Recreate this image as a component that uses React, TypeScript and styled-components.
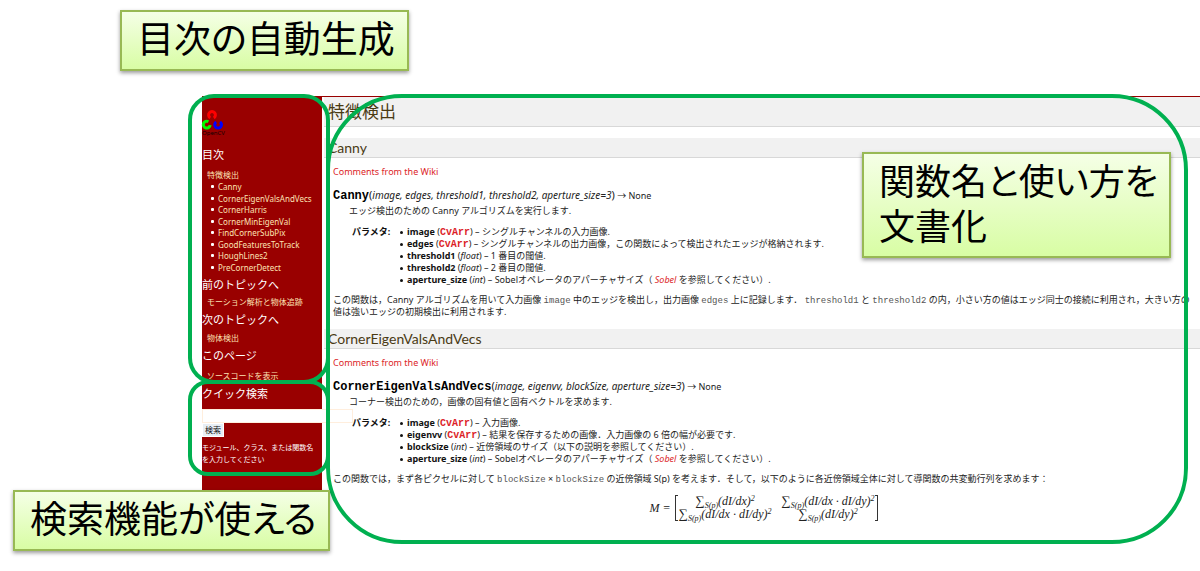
import React from "react";
import styled, { createGlobalStyle } from "styled-components";

const GlobalStyle = createGlobalStyle`
  *, *::before, *::after { box-sizing: border-box; }
  body {
    margin: 0;
    background: #fff;
    font-family: "Noto Sans", "Noto Sans CJK JP", sans-serif;
    font-size: 9px;
    line-height: 12px;
    color: #222;
  }
  h1, h2, h3, p, ul, dl, dt, dd { margin: 0; padding: 0; font-weight: 400; }
`;

const Slide = styled.div`
  position: relative;
  padding: 96px 0 36px 202px;
`;

const Doc = styled.div`
  display: flex;
  align-items: flex-start;
  border-top: 1px solid #900;
`;

const Sidebar = styled.nav`
  flex: 0 0 120px;
  min-width: 0;
  background: #900;
  color: #fff;
  font-size: 8px;
  padding: 13px 0 36px;
`;

const Logo = styled.svg`
  display: block;
  margin-bottom: 10px;
  overflow: visible;
`;

const SideTitle = styled.h3<{ $gap: number }>`
  font-size: 11px;
  line-height: 16px;
  margin-bottom: ${(p) => p.$gap}px;
  white-space: nowrap;
`;

const SideBody = styled.div`
  padding-left: 5px;
  margin-bottom: 4px;
`;

const SideLink = styled.a`
  color: #fde3b4;
  text-decoration: none;
  white-space: nowrap;
`;

const SideList = styled.ul`
  list-style: none;
  display: grid;
  grid-auto-rows: 1fr;
  align-items: center;
  height: 92px;
  padding-left: 4px;
`;

const SideItem = styled.li`
  display: flex;
  align-items: center;
  gap: 4px;
  line-height: 11px;
  &::before {
    content: "";
    width: 3px;
    height: 3px;
    border-radius: 1px;
    background: #fff;
  }
`;

const SearchForm = styled.form`
  display: flex;
  flex-direction: column;
  align-items: flex-start;
  padding-top: 4px;
`;

const SearchInput = styled.input`
  width: 151px;
  height: 14px;
  padding: 0 2px;
  border: 1px solid #ffeedd;
  background: #fff;
  font: inherit;
`;

const SearchButton = styled.button`
  height: 14px;
  padding: 0 2px;
  border: 1px solid #fff;
  background: #e8eef4;
  color: #111;
  font: inherit;
  line-height: 12px;
`;

const SearchHint = styled.p`
  margin-top: 5px;
  padding-right: 6px;
  font-size: 7px;
`;

const Main = styled.main`
  flex: 1;
  min-width: 0;
  margin-left: 2px;
`;

const PageTitle = styled.h1`
  margin-bottom: 11px;
  padding-left: 4px;
  font-size: 17px;
  line-height: 29px;
  color: #4a3a14;
  background: #f1f1f1;
  border-bottom: 1px solid #d8d8d8;
`;

const SectionTitle = styled.h2`
  padding-left: 4px;
  font-family: Lato, "Noto Sans CJK JP", sans-serif;
  font-size: 14px;
  line-height: 19px;
  color: #4a3a14;
  background: #f1f1f1;
  border-bottom: 1px solid #d8d8d8;
`;

const Section = styled.section`
  margin-bottom: 11px;
`;

const Body = styled.div`
  padding: 8px 5px 0 9px;
`;

const RedLink = styled.a`
  color: #dc1e28;
  text-decoration: none;
`;

const Signature = styled.p`
  margin-top: 8px;
  line-height: 18px;
  white-space: nowrap;
`;

const FnName = styled.code`
  font-family: "Liberation Mono", monospace;
  font-size: 12px;
  line-height: 1;
  font-weight: 700;
  color: #000;
`;

const Args = styled.i`
  font-size: 10px;
`;

const Paren = styled.span`
  font-size: 11px;
`;

const Summary = styled.p`
  padding-left: 16px;
`;

const Params = styled.dl`
  display: grid;
  grid-template-columns: 48px 1fr;
  margin: 9px 0 8px;
  padding-left: 19px;
`;

const ParamsLabel = styled.dt`
  font-weight: 700;
  color: #111;
`;

const ParamList = styled.ul`
  list-style: none;
`;

const Param = styled.li`
  display: flex;
  align-items: center;
  white-space: pre;
  b { color: #111; }
  &::before {
    content: "";
    width: 3px;
    height: 3px;
    margin-right: 4px;
    border-radius: 50%;
    background: #111;
  }
`;

const TypeLink = styled(RedLink)`
  font-family: "Liberation Mono", monospace;
  font-size: 10px;
  line-height: 1;
  font-weight: 700;
`;

const Code = styled.code`
  font-family: "Liberation Mono", monospace;
  font-size: 9px;
  line-height: 1;
  color: #555;
`;

const Formula = styled.div`
  display: flex;
  justify-content: center;
  align-items: center;
  gap: 4px;
  margin-top: 10px;
  font-family: "Liberation Serif", serif;
  font-size: 12px;
  font-style: italic;
`;

const Matrix = styled.div`
  display: grid;
  grid-template-columns: auto auto;
  column-gap: 10px;
  justify-items: center;
  position: relative;
  padding: 0 4px;
  line-height: 13px;
  white-space: nowrap;
  &::before, &::after {
    content: "";
    position: absolute;
    top: 0;
    bottom: 0;
    width: 3px;
    border: 1px solid #333;
  }
  &::before { left: 0; border-right: 0; }
  &::after { right: 0; border-left: 0; }
`;

const Cell = styled.span`
  sub, sup { font-size: 8px; line-height: 0; }
  sub { vertical-align: -3px; }
  sup { vertical-align: 4px; }
`;

const Sigma = styled.span`
  font-style: normal;
  font-size: 13px;
  line-height: 0;
`;

const Frame = styled.div<{ $radius: number }>`
  position: absolute;
  border: 4px solid #00b050;
  border-radius: ${(p) => p.$radius}px;
  pointer-events: none;
`;

const TocFrame = styled(Frame)`
  left: 188px;
  top: 94px;
  width: 142px;
  height: 290px;
`;

const SearchFrame = styled(Frame)`
  left: 188px;
  top: 380px;
  width: 142px;
  height: 96px;
`;

const ContentFrame = styled(Frame)`
  left: 326px;
  right: 12px;
  top: 94px;
  height: 450px;
`;

const Callout = styled.div`
  position: absolute;
  padding: 3px 15px 9px;
  border: 2px solid #98b954;
  background: linear-gradient(#f5ffe6, #d8fda4);
  box-shadow: 0 2px 4px rgba(0, 0, 0, 0.4);
  font-family: "Noto Sans CJK JP", sans-serif;
  font-size: 37px;
  font-feature-settings: "palt";
  line-height: 45px;
  color: #000;
  white-space: nowrap;
`;

const TocCallout = styled(Callout)`
  left: 120px;
  top: 10px;
  width: 289px;
`;

const UsageCallout = styled(Callout)`
  right: 29px;
  top: 152px;
  width: 309px;
  font-size: 36px;
`;

const SearchCallout = styled(Callout)`
  left: 13px;
  top: 490px;
  width: 317px;
`;

const tocItems = [
  "Canny",
  "CornerEigenValsAndVecs",
  "CornerHarris",
  "CornerMinEigenVal",
  "FindCornerSubPix",
  "GoodFeaturesToTrack",
  "HoughLines2",
  "PreCornerDetect",
];

type ParamData = { name: string; type: string; text: React.ReactNode };

const sobelText = (
  <>
    Sobelオペレータのアパーチャサイズ（ <RedLink href="#sobel"><i>Sobel</i></RedLink> を参照してください）.
  </>
);

const cannyParams: ParamData[] = [
  { name: "image", type: "CvArr", text: "シングルチャンネルの入力画像." },
  { name: "edges", type: "CvArr", text: "シングルチャンネルの出力画像，この関数によって検出されたエッジが格納されます." },
  { name: "threshold1", type: "float", text: "1 番目の閾値." },
  { name: "threshold2", type: "float", text: "2 番目の閾値." },
  { name: "aperture_size", type: "int", text: sobelText },
];

const eigenParams: ParamData[] = [
  { name: "image", type: "CvArr", text: "入力画像." },
  { name: "eigenvv", type: "CvArr", text: "結果を保存するための画像．入力画像の 6 倍の幅が必要です." },
  { name: "blockSize", type: "int", text: "近傍領域のサイズ（以下の説明を参照してください）." },
  { name: "aperture_size", type: "int", text: sobelText },
];

function FunctionEntry(props: {
  name: string;
  args: string;
  summary: string;
  params: ParamData[];
  children: React.ReactNode;
}) {
  return (
    <Section id={props.name}>
      <SectionTitle>{props.name}</SectionTitle>
      <Body>
        <p><RedLink href="#wiki">Comments from the Wiki</RedLink></p>
        <Signature>
          <FnName>{props.name}</FnName>
          <Paren>(</Paren>
          <Args>{props.args}</Args>
          <Paren>)</Paren> → None
        </Signature>
        <Summary>{props.summary}</Summary>
        <Params>
          <ParamsLabel>パラメタ:</ParamsLabel>
          <dd>
            <ParamList>
              {props.params.map((p) => (
                <Param key={p.name}>
                  <span>
                    <b>{p.name}</b> (
                    {p.type === "CvArr" ? <TypeLink href="#cvarr">CvArr</TypeLink> : <i>{p.type}</i>}
                    ) – {p.text}
                  </span>
                </Param>
              ))}
            </ParamList>
          </dd>
        </Params>
        {props.children}
      </Body>
    </Section>
  );
}

function Term({ body }: { body: string }) {
  return (
    <Cell>
      <Sigma>∑</Sigma>
      <sub>S(p)</sub>({body})<sup>2</sup>
    </Cell>
  );
}

export default function App() {
  return (
    <>
      <GlobalStyle />
      <Slide lang="ja">
        <Doc>
          <Sidebar>
            <Logo width="21" height="27" viewBox="0 0 21 27" role="img" aria-label="OpenCV">
              <g fill="none" strokeWidth="3">
                <path d="M8.2 7.9A3.4 3.4 0 1 1 11.8 7.9" stroke="#f00" />
                <path d="M6.4 11.7A3.4 3.4 0 1 0 8.1 15.1" stroke="#0f0" />
                <path d="M14.2 11.9A3.4 3.4 0 1 0 18 11.9" stroke="#00f" />
              </g>
              <text x="0" y="25" fontSize="6" fontFamily="Noto Sans, sans-serif" fill="#100">OpenCV</text>
            </Logo>
            <SideTitle $gap={6}>目次</SideTitle>
            <SideBody>
              <SideLink href="#top">特徴検出</SideLink>
              <SideList>
                {tocItems.map((t) => (
                  <SideItem key={t}><SideLink href={`#${t}`}>{t}</SideLink></SideItem>
                ))}
              </SideList>
            </SideBody>
            <SideTitle $gap={3}>前のトピックへ</SideTitle>
            <SideBody><SideLink href="#prev">モーション解析と物体追跡</SideLink></SideBody>
            <SideTitle $gap={4}>次のトピックへ</SideTitle>
            <SideBody><SideLink href="#next">物体検出</SideLink></SideBody>
            <SideTitle $gap={6}>このページ</SideTitle>
            <SideBody><SideLink href="#source">ソースコードを表示</SideLink></SideBody>
            <SideTitle $gap={3}><label htmlFor="q">クイック検索</label></SideTitle>
            <SearchForm onSubmit={(e) => e.preventDefault()}>
              <SearchInput id="q" type="text" />
              <SearchButton type="submit">検索</SearchButton>
              <SearchHint>モジュール、クラス、または関数名を入力してください</SearchHint>
            </SearchForm>
          </Sidebar>
          <Main id="top">
            <PageTitle>特徴検出</PageTitle>
            <FunctionEntry
              name="Canny"
              args="image, edges, threshold1, threshold2, aperture_size=3"
              summary="エッジ検出のための Canny アルゴリズムを実行します."
              params={cannyParams}
            >
              <p>
                この関数は，Canny アルゴリズムを用いて入力画像 <Code>image</Code> 中のエッジを検出し，出力画像{" "}
                <Code>edges</Code> 上に記録します． <Code>threshold1</Code> と <Code>threshold2</Code>{" "}
                の内，小さい方の値はエッジ同士の接続に利用され，大きい方の値は強いエッジの初期検出に利用されます.
              </p>
            </FunctionEntry>
            <FunctionEntry
              name="CornerEigenValsAndVecs"
              args="image, eigenvv, blockSize, aperture_size=3"
              summary="コーナー検出のための，画像の固有値と固有ベクトルを求めます."
              params={eigenParams}
            >
              <p>
                この関数では，まず各ピクセルに対して <Code>blockSize</Code> × <Code>blockSize</Code>{" "}
                の近傍領域 S(p) を考えます．そして，以下のように各近傍領域全体に対して導関数の共変動行列を求めます：
              </p>
              <Formula>
                <span>M =</span>
                <Matrix>
                  <Term body="dI/dx" />
                  <Term body="dI/dx · dI/dy" />
                  <Term body="dI/dx · dI/dy" />
                  <Term body="dI/dy" />
                </Matrix>
              </Formula>
            </FunctionEntry>
          </Main>
        </Doc>
        <TocFrame $radius={26} />
        <SearchFrame $radius={20} />
        <ContentFrame $radius={76} />
        <TocCallout>目次の自動生成</TocCallout>
        <UsageCallout>関数名と使い方を<br />文書化</UsageCallout>
        <SearchCallout>検索機能が使える</SearchCallout>
      </Slide>
    </>
  );
}
